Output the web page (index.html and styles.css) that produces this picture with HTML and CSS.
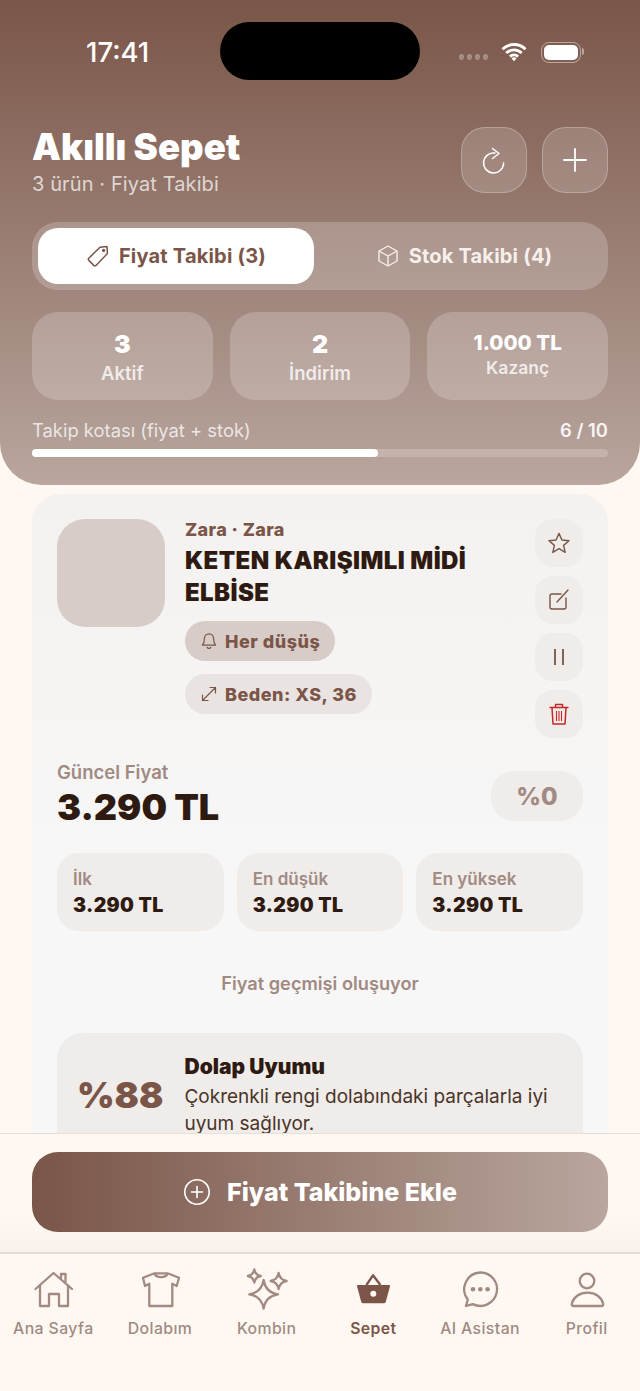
FILE: index.html
```html
<!DOCTYPE html>
<html lang="tr">
  <head>
    <title>Akıllı Sepet</title>
    <meta name="viewport" content="width=device-width, initial-scale=1.0" />
    <link rel="stylesheet" href="styles.css">
  </head>

  <body>
    <div class="phone">
      <div class="island"></div>

      <header class="top">
        <div class="status">
          <span class="time">17:41</span>
          <div class="statusIcons">
            <span class="signal"><i></i><i></i><i></i><i></i></span>
            <svg class="wifi" viewBox="0 0 26 20" width="26" height="20">
              <path d="M1.5 7.2a16.5 16.5 0 0 1 23 0M5.3 11a11 11 0 0 1 15.4 0M9 14.6a5.8 5.8 0 0 1 8 0" fill="none" stroke="#fff" stroke-width="2.9"/>
              <path d="M10.6 16.4a3.5 3.5 0 0 1 4.8 0L13 19.2z" fill="#fff"/>
            </svg>
            <span class="battery"><i></i></span>
          </div>
        </div>

        <div class="titleRow">
          <div>
            <h1>Akıllı Sepet</h1>
            <p class="sub">3 ürün · Fiyat Takibi</p>
          </div>
          <div class="topButtons">
            <button class="glassBtn">
              <svg viewBox="0 0 28 28" width="28" height="28" fill="none" stroke="#fff" stroke-width="1.5" stroke-linecap="round" stroke-linejoin="round">
                <path d="M15 7A10 10 0 1 0 23.6 17"/>
                <path d="M12.5 2.5L19 7.5l-6.5 5"/>
              </svg>
            </button>
            <button class="glassBtn">
              <svg viewBox="0 0 28 28" width="28" height="28" fill="none" stroke="#fff" stroke-width="1.8" stroke-linecap="round">
                <path d="M14 3v22M3 14h22"/>
              </svg>
            </button>
          </div>
        </div>

        <div class="tabs">
          <div class="tab active">
            <svg viewBox="0 0 24 24" width="24" height="24" fill="none" stroke="#7a5548" stroke-width="1.5" stroke-linejoin="round">
              <path d="M14 3.2l7-.6.4 7L10 21.4a1.6 1.6 0 0 1-2.2 0l-5-5a1.6 1.6 0 0 1 0-2.2z"/>
              <circle cx="17.6" cy="6.4" r=".9" fill="#7a5548"/>
            </svg>
            Fiyat Takibi (3)
          </div>
          <div class="tab">
            <svg viewBox="0 0 24 24" width="24" height="24" fill="none" stroke="#f4eeeb" stroke-width="1.4" stroke-linejoin="round">
              <path d="M12 2l9 5v10l-9 5-9-5V7z"/>
              <path d="M3 7l9 5 9-5M12 12v10"/>
            </svg>
            Stok Takibi (4)
          </div>
        </div>

        <div class="stats">
          <div class="stat">
            <strong>3</strong>
            <span>Aktif</span>
          </div>
          <div class="stat">
            <strong>2</strong>
            <span>İndirim</span>
          </div>
          <div class="stat small">
            <strong>1.000 TL</strong>
            <span>Kazanç</span>
          </div>
        </div>

        <div class="quotaText">
          <span>Takip kotası (fiyat + stok)</span>
          <b>6 / 10</b>
        </div>
        <div class="quotaBar"><div class="quotaFill" style="width: 60%"></div></div>
      </header>

      <main>
        <section class="card">
          <div class="itemRow">
            <div class="thumb"></div>
            <div class="itemInfo">
              <div class="brand">Zara · Zara</div>
              <h2>KETEN KARIŞIMLI MİDİ ELBİSE</h2>
              <div class="chip dark">
                <svg viewBox="0 0 18 18" width="18" height="18" fill="none" stroke="#7a5548" stroke-width="1.2" stroke-linejoin="round">
                  <path d="M9 1.8a4.6 4.6 0 0 1 4.6 4.6c0 4 .8 5.4 2 6.8H2.4c1.2-1.4 2-2.8 2-6.8A4.6 4.6 0 0 1 9 1.8z"/>
                  <path d="M7 15a2.1 2.1 0 0 0 4 0"/>
                </svg>
                Her düşüş
              </div>
              <div class="chip">
                <svg viewBox="0 0 18 18" width="18" height="18" fill="none" stroke="#7a5548" stroke-width="1.2" stroke-linecap="round" stroke-linejoin="round">
                  <path d="M2.5 15.5l13-13M10 2.5h5.5V8M2.5 10v5.5H8"/>
                </svg>
                Beden: XS, 36
              </div>
            </div>
            <div class="actions">
              <button class="action">
                <svg viewBox="0 0 24 24" width="24" height="24" fill="none" stroke="#7a5548" stroke-width="1.4" stroke-linejoin="round">
                  <path d="M12 2.4l2.9 6.6 7.1.7-5.4 4.7 1.6 7-6.2-3.7-6.2 3.7 1.6-7L2 9.7l7.1-.7z"/>
                </svg>
              </button>
              <button class="action">
                <svg viewBox="0 0 24 24" width="24" height="24" fill="none" stroke="#7a5548" stroke-width="1.4" stroke-linecap="round" stroke-linejoin="round">
                  <path d="M14 6H5a2 2 0 0 0-2 2v11a2 2 0 0 0 2 2h12a2 2 0 0 0 2-2v-9"/>
                  <path d="M10 14L21 2"/>
                </svg>
              </button>
              <button class="action">
                <svg viewBox="0 0 24 24" width="24" height="24" fill="none" stroke="#7a5548" stroke-width="1.8">
                  <path d="M8 4v16M16 4v16"/>
                </svg>
              </button>
              <button class="action">
                <svg viewBox="0 0 24 24" width="24" height="24" fill="none" stroke="#c62828" stroke-width="1.5" stroke-linejoin="round">
                  <path d="M2.5 5.5h19M8.5 5.5v-3h7v3M5 5.5L6 22h12l1-16.5"/>
                  <path d="M9.5 9v10M12 9v10M14.5 9v10" stroke-width="1.1"/>
                </svg>
              </button>
            </div>
          </div>

          <div class="priceRow">
            <div>
              <div class="priceLabel">Güncel Fiyat</div>
              <div class="price">3.290 TL</div>
            </div>
            <div class="badge">%0</div>
          </div>

          <div class="priceStats">
            <div class="priceStat">
              <span>İlk</span>
              <strong>3.290 TL</strong>
            </div>
            <div class="priceStat">
              <span>En düşük</span>
              <strong>3.290 TL</strong>
            </div>
            <div class="priceStat">
              <span>En yüksek</span>
              <strong>3.290 TL</strong>
            </div>
          </div>

          <p class="history">Fiyat geçmişi oluşuyor</p>

          <div class="match">
            <div class="matchScore">%88</div>
            <div>
              <h3>Dolap Uyumu</h3>
              <p>Çokrenkli rengi dolabındaki parçalarla iyi uyum sağlıyor.</p>
            </div>
          </div>
        </section>
      </main>

      <div class="ctaBar">
        <button class="cta">
          <svg viewBox="0 0 28 28" width="28" height="28" fill="none" stroke="#fff" stroke-width="1.6" stroke-linecap="round">
            <circle cx="14" cy="14" r="12.2"/>
            <path d="M14 8.5v11M8.5 14h11"/>
          </svg>
          Fiyat Takibine Ekle
        </button>
      </div>

      <nav>
        <div class="navItem">
          <svg viewBox="0 0 44 44" width="44" height="44" fill="none" stroke="#a08a82" stroke-width="2.3" stroke-linecap="round" stroke-linejoin="round">
            <path d="M4.5 22L22.5 6 41 22"/>
            <path d="M9 18.5V39h9V27h10v12h9V18.5"/>
            <path d="M30 11V7h4.5v8"/>
          </svg>
          <span>Ana Sayfa</span>
        </div>
        <div class="navItem">
          <svg viewBox="0 0 44 44" width="44" height="44" fill="none" stroke="#a08a82" stroke-width="2.3" stroke-linejoin="round">
            <path d="M16.5 6.3L5 10.7 7 19l4.300-2.300V39h23V16.700L38.700 19l2.300-8.300-11.500-4.400z"/>
            <path d="M16.500 6.300c1 5 12 5 13 0"/>
          </svg>
          <span>Dolabım</span>
        </div>
        <div class="navItem">
          <svg viewBox="0 0 44 44" width="44" height="44" fill="none" stroke="#a08a82" stroke-width="2.3" stroke-linejoin="round">
            <path d="M18.6 13Q20.5 25.4 33 27.3 20.5 29.2 18.6 41.6 16.7 29.2 4.3 27.3 16.7 25.4 18.6 13z"/>
            <path d="M9.3 2.5Q10.3 8 15.8 9 10.3 10 9.3 15.5 8.3 10 2.8 9 8.3 8 9.3 2.5z"/>
            <path d="M33.6 6Q34.8 12.8 41.6 14 34.8 15.2 33.6 22 32.4 15.2 25.6 14 32.4 12.8 33.6 6z"/>
          </svg>
          <span>Kombin</span>
        </div>
        <div class="navItem current">
          <svg viewBox="0 0 44 44" width="44" height="44">
            <path d="M15.4 18L22 8.3 29.4 18" fill="none" stroke="#7a5548" stroke-width="2.3" stroke-linejoin="round"/>
            <path d="M7 18h31a1 1 0 0 1 1 1.2l-4.2 15.600a2 2 0 0 1-2 1.500H12.200a2 2 0 0 1-2-1.500L6 19.200A1 1 0 0 1 7 18z" fill="#7a5548"/>
            <circle cx="22.3" cy="26.7" r="3" fill="#fff8f2"/>
          </svg>
          <span>Sepet</span>
        </div>
        <div class="navItem">
          <svg viewBox="0 0 44 44" width="44" height="44" fill="none" stroke="#a08a82" stroke-width="2.3" stroke-linejoin="round">
            <path d="M22.3 5.5a16.7 16.7 0 1 1-7.500 31.600L8 39l1.800-6.500A16.700 16.700 0 0 1 22.300 5.500z"/>
            <circle cx="15" cy="22.3" r="2.3" fill="#a08a82" stroke="none"/>
            <circle cx="22.3" cy="22.3" r="2.3" fill="#a08a82" stroke="none"/>
            <circle cx="29.6" cy="22.3" r="2.3" fill="#a08a82" stroke="none"/>
          </svg>
          <span>AI Asistan</span>
        </div>
        <div class="navItem">
          <svg viewBox="0 0 44 44" width="44" height="44" fill="none" stroke="#a08a82" stroke-width="2.3" stroke-linejoin="round">
            <circle cx="22" cy="14" r="7.3"/>
            <path d="M8.5 39a1.800 1.800 0 0 1-1.700-2.300C8.500 30 14.500 25.700 22.500 25.700S36.500 30 38.200 36.700A1.800 1.800 0 0 1 36.500 39z"/>
          </svg>
          <span>Profil</span>
        </div>
      </nav>
    </div>
  </body>
</html>
```

FILE: styles.css
```css
*,
*::before,
*::after {
  box-sizing: border-box;
}

* {
  margin: 0;
}

body {
  background: #fff8f2;
  font-family: Inter, Roboto, sans-serif;
  color: #2e1a10;
}

button {
  border: none;
  font: inherit;
  padding: 0;
}

.phone {
  display: flex;
  flex-direction: column;
  height: 1391px;
  overflow: hidden;
  position: relative;
  width: 640px;
}

.island {
  background: #000;
  border-radius: 29px;
  height: 58px;
  left: 220px;
  position: absolute;
  top: 22px;
  width: 200px;
}

/* header */

.top {
  background: linear-gradient(180deg, #7a5548 0%, #b9a69e 100%);
  border-radius: 0 0 42px 42px;
  flex: none;
  height: 485px;
  padding: 0 32px;
}

.status {
  align-items: center;
  color: #fff;
  display: flex;
  height: 104px;
  justify-content: space-between;
  padding: 0 27px 0 54px;
}

.time {
  font-size: 27.5px;
  font-weight: 500;
}

.statusIcons {
  align-items: center;
  display: flex;
}

.signal {
  display: flex;
  gap: 3px;
  margin: 10px 13px 0 0;
}

.signal i {
  background: rgba(255, 255, 255, 0.3);
  border-radius: 50%;
  height: 6px;
  width: 5px;
}

.wifi {
  margin-right: 14px;
}

.battery {
  border: 1.5px solid rgba(255, 255, 255, 0.45);
  border-radius: 8px;
  display: block;
  height: 21px;
  padding: 2px;
  position: relative;
  width: 40px;
}

.battery i {
  background: #fff;
  border-radius: 5px;
  display: block;
  height: 100%;
}

.battery::after {
  background: rgba(255, 255, 255, 0.45);
  border-radius: 0 2px 2px 0;
  content: "";
  height: 7px;
  position: absolute;
  right: -4px;
  top: 5.5px;
  width: 2px;
}

.titleRow {
  display: flex;
  height: 66px;
  justify-content: space-between;
  margin-top: 23px;
}

h1 {
  color: #fff;
  font-size: 36.5px;
  font-weight: 900;
  line-height: 40px;
}

.sub {
  color: rgba(255, 255, 255, 0.72);
  font-size: 20px;
  letter-spacing: 0.1px;
  line-height: 28px;
  margin-top: 3px;
}

.topButtons {
  display: flex;
  gap: 15px;
}

.glassBtn {
  align-items: center;
  background: rgba(255, 255, 255, 0.16);
  border: 1.5px solid rgba(255, 255, 255, 0.25);
  border-radius: 24px;
  display: flex;
  height: 66px;
  justify-content: center;
  width: 66px;
}

.tabs {
  background: rgba(255, 255, 255, 0.2);
  border-radius: 26px;
  display: flex;
  gap: 12px;
  height: 68px;
  margin-top: 29px;
  padding: 6px;
}

.tab {
  align-items: center;
  color: #f6f0ed;
  display: flex;
  flex: 1;
  font-size: 20px;
  font-weight: 700;
  gap: 9px;
  justify-content: center;
  letter-spacing: 0.2px;
}

.tab.active {
  background: #fff;
  border-radius: 20px;
  color: #7a5548;
}

.stats {
  display: flex;
  gap: 17px;
  margin-top: 22px;
}

.stat {
  align-items: center;
  background: rgba(255, 255, 255, 0.2);
  border-radius: 26px;
  color: #fff;
  display: flex;
  flex: 1;
  flex-direction: column;
  height: 88px;
  padding-top: 17px;
}

.stat strong {
  font-size: 25px;
  font-weight: 900;
  line-height: 30px;
}

.stat span {
  color: rgba(255, 255, 255, 0.8);
  font-size: 18.5px;
  font-weight: 600;
  line-height: 28px;
}

.stat.small strong {
  font-size: 20.5px;
  font-weight: 800;
  line-height: 27px;
}

.stat.small span {
  font-size: 17.5px;
  line-height: 24px;
}

.quotaText {
  color: rgba(255, 255, 255, 0.75);
  display: flex;
  font-size: 18.4px;
  justify-content: space-between;
  line-height: 22px;
  margin-top: 19px;
}

.quotaText b {
  color: rgba(255, 255, 255, 0.92);
  font-weight: 600;
}

.quotaBar {
  background: rgba(255, 255, 255, 0.2);
  border-radius: 4px;
  height: 8px;
  margin-top: 8px;
}

.quotaFill {
  background: #fff;
  border-radius: 4px;
  height: 100%;
}

/* card */

main {
  flex: 1;
  min-height: 0;
  overflow: hidden;
  padding: 9px 32px 0;
}

.card {
  background: linear-gradient(180deg, #f3f2f0 0%, #f8f7f7 60%);
  border-radius: 28px;
  padding: 25px;
}

.itemRow {
  display: flex;
}

.thumb {
  background: #d8ccc8;
  border-radius: 28px;
  flex: none;
  height: 108px;
  width: 108px;
}

.itemInfo {
  align-items: flex-start;
  display: flex;
  flex: 1;
  flex-direction: column;
  padding-left: 20px;
  padding-right: 50px;
}

.brand {
  color: #7a5548;
  font-size: 18px;
  font-weight: 800;
  letter-spacing: 0.4px;
  line-height: 22px;
}

h2 {
  color: #2e1a10;
  font-size: 24px;
  font-weight: 900;
  letter-spacing: 0.4px;
  line-height: 32px;
  margin-top: 4px;
}

.chip {
  align-items: center;
  background: #e9e3e1;
  border-radius: 20px;
  color: #7a5548;
  display: flex;
  font-size: 18px;
  font-weight: 800;
  gap: 7px;
  height: 40px;
  letter-spacing: 0.5px;
  margin-top: 13px;
  padding: 0 15px;
}

.chip.dark {
  background: #d8ccc8;
  margin-top: 12px;
}

.actions {
  display: flex;
  flex: none;
  flex-direction: column;
  gap: 9px;
  width: 48px;
}

.action {
  align-items: center;
  background: #efecea;
  border-radius: 18px;
  display: flex;
  height: 48px;
  justify-content: center;
}

.priceRow {
  align-items: flex-start;
  display: flex;
  justify-content: space-between;
  margin-top: 23px;
}

.priceLabel {
  color: #a08a82;
  font-size: 18.5px;
  font-weight: 600;
  line-height: 22px;
}

.price {
  font-size: 36px;
  font-weight: 900;
  line-height: 49px;
}

.badge {
  align-items: center;
  background: #efecea;
  border-radius: 23px;
  color: #a08a82;
  display: flex;
  font-size: 24px;
  font-weight: 800;
  height: 50px;
  justify-content: center;
  margin-top: 10px;
  width: 92px;
}

.priceStats {
  display: flex;
  gap: 13px;
  margin-top: 21px;
}

.priceStat {
  background: #efecea;
  border-radius: 22px;
  display: flex;
  flex: 1;
  flex-direction: column;
  height: 78px;
  padding: 14px 16px 0;
}

.priceStat span {
  color: #a08a82;
  font-size: 17px;
  font-weight: 600;
  line-height: 24px;
}

.priceStat strong {
  font-size: 19.5px;
  font-weight: 900;
  letter-spacing: 0.35px;
  line-height: 29px;
}

.history {
  color: #a08a82;
  font-size: 18.2px;
  font-weight: 600;
  line-height: 24px;
  margin-top: 40px;
  text-align: center;
}

.match {
  align-items: center;
  background: #efecea;
  border-radius: 26px;
  display: flex;
  gap: 21px;
  height: 124px;
  margin-top: 38px;
  padding: 0 20px;
}

.matchScore {
  color: #7a5548;
  flex: none;
  font-size: 36px;
  font-weight: 900;
}

h3 {
  font-size: 21px;
  font-weight: 900;
  line-height: 26px;
}

.match p {
  color: #4a3428;
  font-size: 19px;
  line-height: 27px;
  margin-top: 3px;
}

/* bottom */

.ctaBar {
  background: linear-gradient(180deg, #fff8f2 70%, #f8f1ec 100%);
  border-top: 1px solid #e6dfda;
  flex: none;
  height: 119px;
  padding: 18px 32px 0;
  position: relative;
}

.cta {
  align-items: center;
  background: linear-gradient(90deg, #7a5548 0%, #b9a69e 100%);
  border-radius: 26px;
  color: #fff;
  display: flex;
  font-size: 25px;
  font-weight: 800;
  gap: 16px;
  height: 80px;
  justify-content: center;
  width: 100%;
}

nav {
  background: #fff8f2;
  border-top: 2px solid #e2d9d4;
  display: flex;
  flex: none;
  height: 139px;
  padding-top: 13px;
}

.navItem {
  align-items: center;
  color: #a08a82;
  display: flex;
  flex: 1;
  flex-direction: column;
  font-size: 15.8px;
  font-weight: 500;
  letter-spacing: 0.4px;
}

.navItem span {
  line-height: 20px;
  margin-top: 8px;
}

.navItem.current {
  color: #7a5548;
  font-weight: 600;
}
```
